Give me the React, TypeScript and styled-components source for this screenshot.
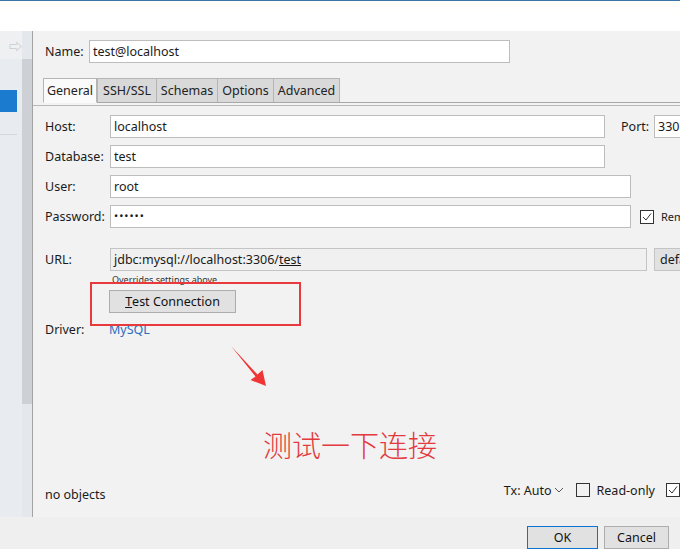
import React from 'react';
import styled, { createGlobalStyle } from 'styled-components';

const GlobalStyle = createGlobalStyle`
  html, body {
    margin: 0;
    padding: 0;
    background: #f0f0f0;
  }
  body {
    font-family: 'Noto Sans', 'Noto Sans CJK SC', sans-serif;
    font-size: 12.5px;
    color: #1a1a1a;
  }
`;

const Window = styled.div`
  width: 680px;
  height: 549px;
  display: flex;
  flex-direction: column;
  overflow: hidden;
  background: #f0f0f0;
`;

const TitleBar = styled.div`
  height: 30px;
  border-top: 1px solid #3b74aa;
  background: linear-gradient(#fffdf6, #ffffff 40%);
  flex: none;
`;

const Body = styled.div`
  flex: 1;
  display: flex;
  min-height: 0;
`;

const Sidebar = styled.div`
  width: 32px;
  flex: none;
  display: flex;
  border-right: 1px solid #a3a3a3;
  background: #e8ecf0;
`;

const SideList = styled.div`
  width: 22px;
  display: flex;
  flex-direction: column;
`;

const SideHeader = styled.div`
  height: 28px;
  background: #eef0f2;
  display: flex;
  align-items: center;
  justify-content: flex-end;
  color: #b9bec4;
  font-size: 13px;
`;

const SideItem = styled.div<{ $selected?: boolean }>`
  height: 22px;
  width: 17px;
  margin-top: ${({ $selected }) => ($selected ? '31px' : '0')};
  background: ${({ $selected }) => ($selected ? '#1a7bcf' : 'transparent')};
  border-bottom: ${({ $selected }) => ($selected ? 'none' : '1px solid #d3d8dd')};
`;

const ScrollTrack = styled.div`
  width: 10px;
  display: flex;
  flex-direction: column;
  background: #e4e8ec;
`;

const ScrollThumb = styled.div`
  margin-top: 28px;
  height: 345px;
  background: #cdd1d6;
`;

const Main = styled.div`
  position: relative;
  flex: 1;
  display: flex;
  flex-direction: column;
  padding: 9px 0 0 12px;
  overflow: hidden;
  background: #f2f2f2;
`;

const Row = styled.div<{ $top?: number; $indent?: number }>`
  display: flex;
  align-items: center;
  flex: none;
  margin-top: ${({ $top }) => $top ?? 0}px;
  padding-left: ${({ $indent }) => $indent ?? 0}px;
`;

const Label = styled.span<{ $width: number; $left?: number }>`
  width: ${({ $width }) => $width}px;
  margin-left: ${({ $left }) => $left ?? 0}px;
  flex: none;
  white-space: nowrap;
`;

const Input = styled.div<{ $width: number }>`
  width: ${({ $width }) => $width}px;
  height: 21px;
  flex: none;
  box-sizing: content-box;
  border: 1px solid #bdbdbd;
  background: #ffffff;
  display: flex;
  align-items: center;
  padding-left: 3px;
  white-space: nowrap;
  overflow: hidden;
`;

const UrlInput = styled(Input)`
  background: #f0f0f0;
  border-color: #c4c4c4;
`;

const Underline = styled.span`
  text-decoration: underline;
`;

const Dots = styled.span`
  letter-spacing: 1px;
  font-size: 11px;
  position: relative;
  top: -1px;
`;

const TabStrip = styled.div`
  display: flex;
  margin: 15px 0 0 -2px;
  height: 24px;
  border-bottom: 1px solid #a8a8a8;
  flex: none;
`;

const Tab = styled.div<{ $active?: boolean; $last?: boolean; $width: number }>`
  width: ${({ $width }) => $width}px;
  box-sizing: border-box;
  display: flex;
  align-items: center;
  justify-content: center;
  border: 1px solid #b5b5b5;
  border-right: ${({ $active, $last }) => ($active || $last ? '1px solid #b5b5b5' : 'none')};
  border-bottom: ${({ $active }) => ($active ? '1px solid #fafafa' : 'none')};
  margin-bottom: ${({ $active }) => ($active ? '-1px' : '0')};
  background: ${({ $active }) => ($active ? '#fafafa' : '#d9d9d9')};
  color: #222;
`;

const PanelLine = styled.div`
  margin: 2px 0 0 -12px;
  height: 1px;
  background: #b8b8b8;
  flex: none;
`;

const Checkbox = styled.span<{ $checked?: boolean; $left?: number }>`
  width: 12px;
  height: 12px;
  flex: none;
  margin-left: ${({ $left }) => $left ?? 0}px;
  border: 1px solid #333;
  background: ${({ $checked }) => ($checked ? '#fff' : 'transparent')};
  display: inline-flex;
  align-items: center;
  justify-content: center;
`;

const CheckText = styled.span<{ $small?: boolean; $right?: number }>`
  margin-left: 7px;
  margin-right: ${({ $right }) => $right ?? 0}px;
  font-size: ${({ $small }) => ($small ? '11px' : 'inherit')};
  white-space: nowrap;
`;

const SideButton = styled.div`
  width: 60px;
  height: 21px;
  flex: none;
  margin-left: 7px;
  border: 1px solid #c4c4c4;
  background: #e1e1e1;
  display: flex;
  align-items: center;
  padding-left: 5px;
`;

const Hint = styled.div`
  font-size: 9px;
  margin: 2px 0 0 67px;
  height: 13px;
  color: #333;
  flex: none;
`;

const Button = styled.div<{ $width: number; $primary?: boolean }>`
  width: ${({ $width }) => $width}px;
  height: 21px;
  box-sizing: content-box;
  flex: none;
  border: 1px solid ${({ $primary }) => ($primary ? '#0a74d4' : '#adadad')};
  background: #e1e1e1;
  display: flex;
  align-items: center;
  justify-content: center;
  color: #111;
`;

const Link = styled.span`
  color: #2a6ec0;
`;

const Spacer = styled.div`
  flex: 1;
`;

const StatusRow = styled.div`
  display: flex;
  align-items: center;
  height: 20px;
  margin-bottom: 13px;
  flex: none;
`;

const StatusControls = styled.div`
  margin-left: auto;
  margin-bottom: 8px;
  display: flex;
  align-items: center;
`;

const TxSelect = styled.span`
  display: inline-flex;
  align-items: center;
  gap: 2px;
  margin-right: 12px;
`;

const Footer = styled.div`
  height: 23px;
  flex: none;
  display: flex;
  justify-content: flex-end;
  align-items: flex-start;
  padding: 9px 11px 0 0;
  gap: 6px;
  background: #efefef;
`;

const Annotation = styled.div`
  position: absolute;
  left: 57px;
  top: 251px;
  width: 207px;
  height: 40px;
  border: 2px solid #e8393d;
  pointer-events: none;
`;

const ArrowMark = styled.svg`
  position: absolute;
  left: 195px;
  top: 312px;
`;

const Caption = styled.div`
  position: absolute;
  left: 230px;
  top: 392px;
  font-family: 'Noto Sans CJK SC', sans-serif;
  font-size: 29px;
  font-weight: 300;
  color: #e23a3e;
  white-space: nowrap;
`;

const Check = () => (
  <svg width="10" height="10" viewBox="0 0 10 10">
    <path d="M1 5 L4 8 L9 1.5" fill="none" stroke="#333" strokeWidth="1" />
  </svg>
);

export default function App() {
  return (
    <Window>
      <GlobalStyle />
      <TitleBar />
      <Body>
        <Sidebar>
          <SideList>
            <SideHeader>⇨</SideHeader>
            <SideItem $selected />
            <SideItem />
          </SideList>
          <ScrollTrack>
            <ScrollThumb />
          </ScrollTrack>
        </Sidebar>
        <Main>
          <Row>
            <Label $width={44}>Name:</Label>
            <Input $width={416}>test@localhost</Input>
          </Row>
          <TabStrip>
            <Tab $active $width={54}>General</Tab>
            <Tab $width={59}>SSH/SSL</Tab>
            <Tab $width={61}>Schemas</Tab>
            <Tab $width={56}>Options</Tab>
            <Tab $last $width={67}>Advanced</Tab>
          </TabStrip>
          <PanelLine />
          <Row $top={9}>
            <Label $width={65}>Host:</Label>
            <Input $width={490}>localhost</Input>
            <Label $width={33} $left={16}>Port:</Label>
            <Input $width={60}>3306</Input>
          </Row>
          <Row $top={7}>
            <Label $width={65}>Database:</Label>
            <Input $width={490}>test</Input>
          </Row>
          <Row $top={7}>
            <Label $width={65}>User:</Label>
            <Input $width={516}>root</Input>
          </Row>
          <Row $top={7}>
            <Label $width={65}>Password:</Label>
            <Input $width={516}>
              <Dots>••••••</Dots>
            </Input>
            <Checkbox $checked $left={9}>
              <Check />
            </Checkbox>
            <CheckText $small>Remember</CheckText>
          </Row>
          <Row $top={20}>
            <Label $width={65}>URL:</Label>
            <UrlInput $width={532}>
              jdbc:mysql://localhost:3306/<Underline>test</Underline>
            </UrlInput>
            <SideButton>default</SideButton>
          </Row>
          <Hint>Overrides settings above</Hint>
          <Row $top={4} $indent={64}>
            <Button $width={125}>
              <Underline>T</Underline>est Connection
            </Button>
          </Row>
          <Row $top={8}>
            <Label $width={64}>Driver:</Label>
            <Link>MySQL</Link>
          </Row>
          <Spacer />
          <StatusRow>
            <span>no objects</span>
            <StatusControls>
              <TxSelect>
                Tx: Auto
                <svg width="10" height="8" viewBox="0 0 10 8">
                  <path d="M1 2 L5 6 L9 2" fill="none" stroke="#555" strokeWidth="1" />
                </svg>
              </TxSelect>
              <Checkbox />
              <CheckText $right={11}>Read-only</CheckText>
              <Checkbox $checked>
                <Check />
              </Checkbox>
            </StatusControls>
          </StatusRow>
          <Annotation />
          <ArrowMark width="42" height="46" viewBox="0 0 42 46">
            <polygon
              points="3,3 29.5,31.5 34.5,27 38,43 22.5,37 27.5,33.5"
              fill="#f03535"
            />
          </ArrowMark>
          <Caption>测试一下连接</Caption>
        </Main>
      </Body>
      <Footer>
        <Button $width={69} $primary>OK</Button>
        <Button $width={63}>Cancel</Button>
      </Footer>
    </Window>
  );
}
